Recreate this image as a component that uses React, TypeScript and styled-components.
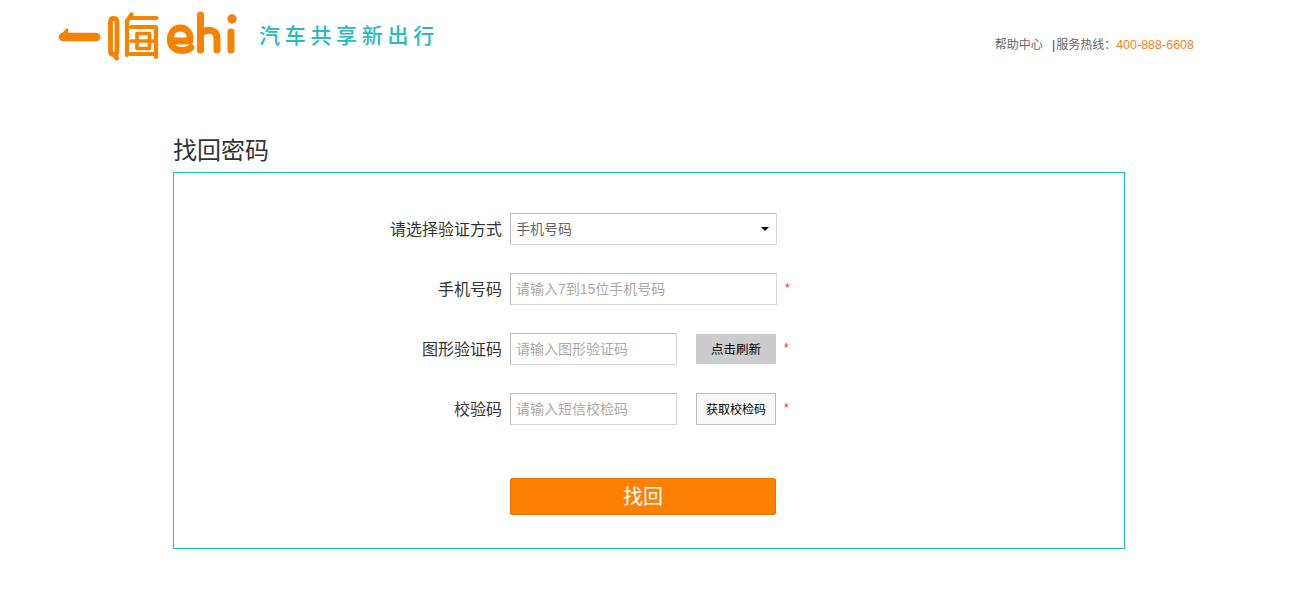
import React from "react";
import styled, { createGlobalStyle } from "styled-components";

const Global = createGlobalStyle`
  html, body { margin: 0; padding: 0; background: #fff; }
  body { font-family: "Liberation Sans", "Noto Sans CJK SC", sans-serif; color: #333; }
  * { box-sizing: border-box; }
`;
const Header = styled.header`
  height: 134px; display: flex; align-items: flex-start; justify-content: space-between;
  padding: 0 105px 0 58px;
`;
const Brand = styled.div`display: flex; align-items: flex-start;`;
const Slogan = styled.span`
  margin: 22px 0 0 19px; font-size: 21px; font-weight: 500; line-height: 28px; letter-spacing: 4.700px;
  color: #2ab9bd; white-space: nowrap; width: 182px;
`;
const Service = styled.div`margin-top: 37px; font-size: 12px; line-height: 16px; color: #666; white-space: nowrap;`;
const Divider = styled.span`margin: 0 1px 0 6px; color: #4b1f6f;`;
const Phone = styled.span`font-size: 12.5px; color: #ff7f20;`;
const Main = styled.main`width: 952px; margin-left: 173px;`;
const Title = styled.h1`margin: 0 0 4px; font-size: 24px; line-height: 34px; font-weight: 400; color: #333;`;
const Card = styled.form`
  border: 1px solid #1dbcc0; height: 377px; padding-top: 40px;
  display: flex; flex-direction: column;
`;
const Row = styled.div`display: flex; align-items: center; height: 32px; margin-bottom: 28px;`;
const Label = styled.label`
  width: 328px; margin-right: 8px; padding-bottom: 3px; text-align: right;
  font-size: 16px; color: #333; white-space: nowrap;
`;
const boxStyle = `
  height: 32px; padding: 0 5px; font: 14px "Liberation Sans", "Noto Sans CJK SC", sans-serif;
  border: 1px solid; border-color: #bdbdbd #d8d8d8 #d8d8d8 #bdbdbd; background: #fff; outline: none; border-radius: 0;
`;
const Input = styled.input<{ $wide?: boolean }>`
  ${boxStyle} width: ${p => (p.$wide ? 267 : 167)}px; color: #666;
  &::placeholder { color: #aaa; opacity: 1; }
`;
const SelectWrap = styled.div`position: relative; width: 267px; height: 32px;`;
const Select = styled.select`${boxStyle} width: 267px; color: #666; appearance: none;`;
const Caret = styled.i`
  position: absolute; right: 8px; top: 14px; width: 0; height: 0;
  border: 4px solid transparent; border-top-color: #000; border-bottom: 0;
`;
const SideButton = styled.button<{ $muted?: boolean }>`
  width: 80px; height: ${p => (p.$muted ? 30 : 32)}px; margin-left: 19px; padding: 0 0 2px;
  font: ${p => (p.$muted ? 12.5 : 12)}px "Liberation Sans", "Noto Sans CJK SC", sans-serif; color: #000; border-radius: 0;
  background: ${p => (p.$muted ? "#ccc" : "#f8f8f8")};
  border: ${p => (p.$muted ? "none" : "1px solid #bbb")};
`;
const Star = styled.span<{ $gap: number }>`
  margin-left: ${p => p.$gap}px; margin-top: -3px; font-size: 12px; line-height: 14px; color: #f22;
`;
const Submit = styled.button`
  display: block; width: 266px; height: 37px; margin: 25px 0 0 336px; padding: 0 0 2px;
  background: #ff7f00; border: 1px solid #e57507; border-radius: 2px; color: #fff;
  font: 20px "Liberation Sans", "Noto Sans CJK SC", sans-serif;
`;

function Logo() {
  return (
    <svg width="182" height="62" viewBox="58 0 182 62" fill="none" stroke="#f58200" strokeLinecap="round" strokeLinejoin="round" role="img" aria-label="一嗨 ehi" style={{ display: "block" }}>
      <path d="M63 37H96" strokeWidth="8.500" />
      <path d="M60.500 37L67 29.500V37Z" fill="#f58200" strokeWidth="2.500" />
      <path d="M113.500 18.500C116.500 18.500 117 20 117 22V51C117 53 116.500 54.500 113.500 54.500C111 54.500 110.500 53 110.500 51V22C110.500 20 111 18.500 113.500 18.500ZM115 55L116.500 58" strokeWidth="4.800" />
      <path d="M131.500 14.500L127 21V55M130 18H156.500M131 27H156V57M130 54H155" strokeWidth="4.200" />
      <path d="M137 33.500H149.500V48.500H137ZM131 41H155" strokeWidth="3.600" />
      <path d="M174 41H190C191 32 186 28 180 28C174 28 170.300 33 170.300 39.500C170.300 47 175.500 50.500 181.500 50.500C186 50.500 189 49.500 191 47.500" strokeWidth="6.800" />
      <path d="M200.500 15V50M200.500 36.500C201 28.500 217 27 217 38V50" strokeWidth="7" />
      <path d="M231 32V50" strokeWidth="7" />
      <circle cx="232" cy="19" r="3.200" fill="#f58200" strokeWidth="3" />
    </svg>
  );
}

export default function App() {
  return (
    <>
      <Global />
      <Header>
        <Brand>
          <Logo />
          <Slogan>汽车共享新出行</Slogan>
        </Brand>
        <Service>
          帮助中心 <Divider>|</Divider>服务热线：<Phone>400-888-6608</Phone>
        </Service>
      </Header>
      <Main>
        <Title>找回密码</Title>
        <Card>
          <Row>
            <Label>请选择验证方式</Label>
            <SelectWrap>
              <Select defaultValue="phone"><option value="phone">手机号码</option></Select>
              <Caret />
            </SelectWrap>
          </Row>
          <Row>
            <Label>手机号码</Label>
            <Input $wide placeholder="请输入7到15位手机号码" />
            <Star $gap={8}>*</Star>
          </Row>
          <Row>
            <Label>图形验证码</Label>
            <Input placeholder="请输入图形验证码" />
            <SideButton type="button" $muted>点击刷新</SideButton>
            <Star $gap={8}>*</Star>
          </Row>
          <Row>
            <Label>校验码</Label>
            <Input placeholder="请输入短信校检码" />
            <SideButton type="button">获取校检码</SideButton>
            <Star $gap={8}>*</Star>
          </Row>
          <Submit type="button">找回</Submit>
        </Card>
      </Main>
    </>
  );
}
